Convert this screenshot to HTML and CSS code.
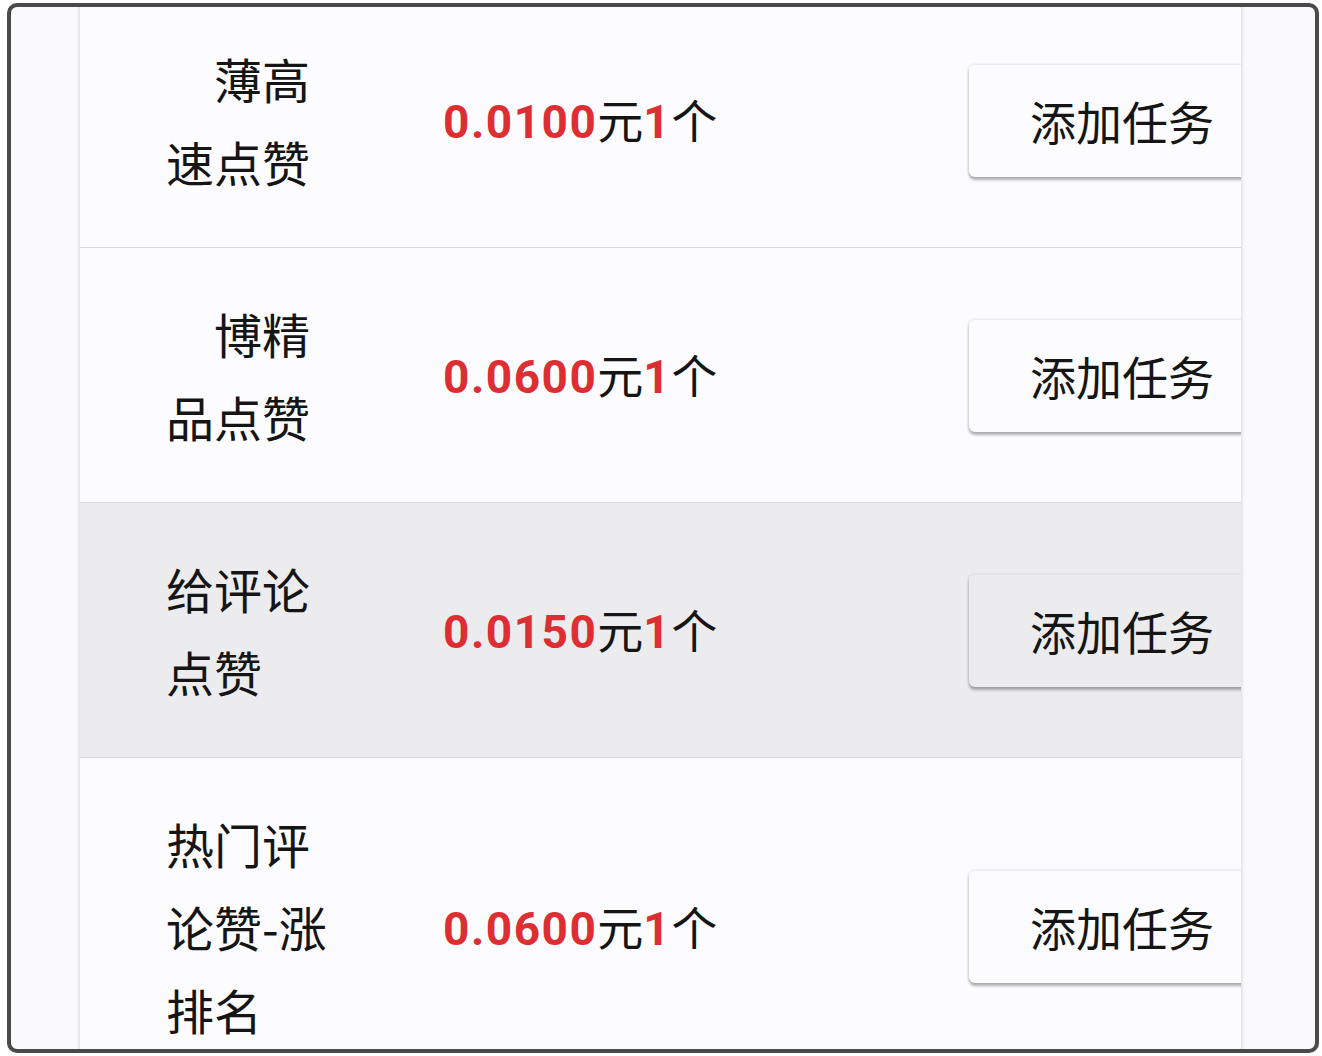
FILE: index.html
```html
<!doctype html>
<html lang="zh-CN">
	<head>
		<meta charset="UTF-8">
		<title>添加任务</title>
		<link rel="stylesheet" href="styles.css">
	</head>
	<body>
		<div class="frame">
			<div class="panel">
				<div class="row">
					<div class="label indent">薄高速点赞</div>
					<div class="price"><span class="num">0.0100</span>元<span class="num">1</span>个</div>
					<div class="btn">添加任务</div>
				</div>
				<div class="row">
					<div class="label indent">博精品点赞</div>
					<div class="price"><span class="num">0.0600</span>元<span class="num">1</span>个</div>
					<div class="btn">添加任务</div>
				</div>
				<div class="row row-on">
					<div class="label">给评论点赞</div>
					<div class="price"><span class="num">0.0150</span>元<span class="num">1</span>个</div>
					<div class="btn">添加任务</div>
				</div>
				<div class="row">
					<div class="label">热门评论赞-涨排名</div>
					<div class="price"><span class="num">0.0600</span>元<span class="num">1</span>个</div>
					<div class="btn">添加任务</div>
				</div>
			</div>
		</div>
	</body>
</html>
```

FILE: styles.css
```css
html,body{
	margin:0;
	padding:0;
	background:#fff;
}
body{
	font-family:"Noto Sans CJK SC","Noto Sans",sans-serif;
	color:#151515;
}
.frame{
	box-sizing:border-box;
	width:1312px;
	height:1050px;
	margin:3px 0 0 7px;
	border:4px solid #4a4a4a;
	border-radius:10px;
	background:#fafafc;
	overflow:hidden;
}
.panel{
	width:1161px;
	margin:-14px 0 0 69px;
	background:#fcfcfe;
	box-shadow:0 0 4px rgba(0,0,0,.2);
	overflow:hidden;
}
.row{
	display:flex;
	align-items:center;
	padding:44px 0 44px 86px;
	border-bottom:1px solid #d9d9db;
}
.row-on{
	background:#ececee;
}
.label{
	flex:0 0 170px;
	margin-right:107px;
	font-size:48px;
	line-height:83px;
}
.indent{
	text-indent:1em;
}
.price{
	flex:1;
	font-size:46px;
	line-height:60px;
}
.num{
	font-family:Roboto,"Liberation Sans",sans-serif;
	font-weight:bold;
	letter-spacing:1.5px;
	color:#dc2e33;
}
.btn{
	box-sizing:border-box;
	width:306px;
	height:113px;
	margin-right:-34px;
	font-size:46px;
	line-height:111px;
	text-align:center;
	border-top:1px solid #ececee;
	border-radius:6px 0 0 6px;
	box-shadow:0 3px 3px rgba(0,0,0,.3),-1px 0 3px rgba(0,0,0,.08);
}
.row-on .btn{
	border-top-color:#e4e4e6;
}
```
